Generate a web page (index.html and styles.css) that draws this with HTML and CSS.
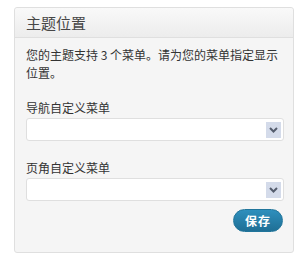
FILE: index.html
```html
<!DOCTYPE html>
<html>
<head>
    <link rel="stylesheet" href="styles.css">
</head>
<body>
    <div class="widget">
        <div class="widget-title">主题位置</div>
        <div class="widget-body">
            <p class="intro">您的主题支持 3 个菜单。请为您的菜单指定显示位置。</p>
            <label class="field-label">导航自定义菜单</label>
            <div class="select">
                <span class="select-arrow">
                    <svg width="9" height="6" viewBox="0 0 9 6"><path d="M1 1 L4.5 4.5 L8 1" fill="none" stroke="#555d6e" stroke-width="2"/></svg>
                </span>
            </div>
            <label class="field-label second">页角自定义菜单</label>
            <div class="select">
                <span class="select-arrow">
                    <svg width="9" height="6" viewBox="0 0 9 6"><path d="M1 1 L4.5 4.5 L8 1" fill="none" stroke="#555d6e" stroke-width="2"/></svg>
                </span>
            </div>
            <div class="actions">
                <button class="save">保存</button>
            </div>
        </div>
    </div>
</body>
</html>
```

FILE: styles.css
```css
body {
    margin: 0;
    background-color: #fff;
    font-family: "Noto Sans CJK SC", "DejaVu Sans", sans-serif;
    color: #333;
}

.widget {
    box-sizing: border-box;
    width: 280px;
    height: 246px;
    margin: 7px 0 0 14px;
    border: 1px solid #dfdfdf;
    border-radius: 3px;
    background-color: #f5f5f5;
}

.widget-title {
    height: 29px;
    line-height: 29px;
    padding-left: 11px;
    font-size: 15px;
    color: #464646;
    border-bottom: 1px solid #dfdfdf;
    background: linear-gradient(#f9f9f9, #ececec);
    border-radius: 3px 3px 0 0;
}

.widget-body {
    padding: 8px 9px 0 11px;
}

.intro {
    margin: 0;
    font-size: 12px;
    line-height: 18px;
}

.field-label {
    display: block;
    margin-top: 17px;
    font-size: 12px;
    line-height: 18px;
}

.field-label.second {
    margin-top: 18px;
}

.select {
    box-sizing: border-box;
    height: 23px;
    margin-top: 1px;
    border: 1px solid #dfdfdf;
    border-radius: 3px;
    background-color: #fff;
    display: flex;
    align-items: center;
    justify-content: flex-end;
    padding-right: 2px;
}

.select-arrow {
    width: 15px;
    height: 16px;
    background-color: #d4dbea;
    display: flex;
    align-items: center;
    justify-content: center;
}

.actions {
    display: flex;
    justify-content: flex-end;
    margin-top: 8px;
    padding-right: 1px;
}

.save {
    width: 50px;
    height: 23px;
    padding: 0;
    border: 1px solid #21759b;
    border-radius: 12px;
    background: linear-gradient(#2e8fbd, #1f6f95);
    color: #fff;
    font-family: "Noto Sans CJK SC", sans-serif;
    font-size: 12px;
    font-weight: bold;
    letter-spacing: 1px;
    cursor: pointer;
}
```
